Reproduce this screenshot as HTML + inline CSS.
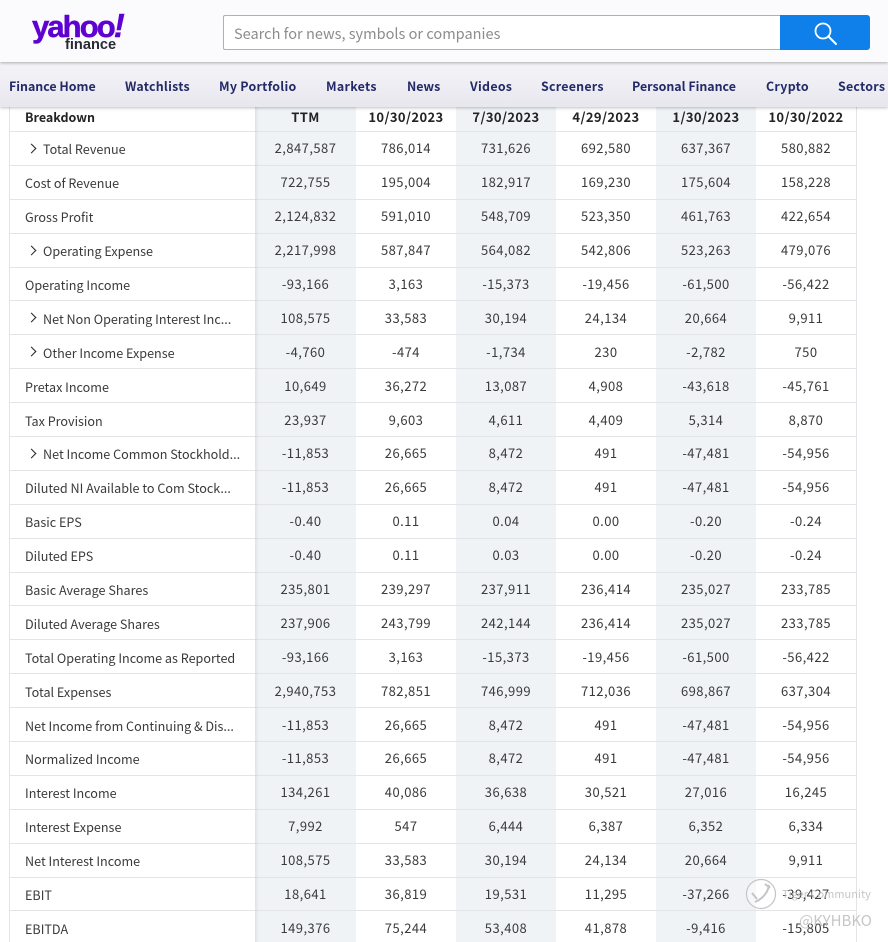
<!DOCTYPE html>
<html><head><meta charset="utf-8">
<style>
html,body{margin:0;padding:0;background:#fff;width:888px;height:942px;overflow:hidden;}
#p{width:888px;height:942px;overflow:hidden;position:relative;font-family:"Noto Sans CJK JP","Liberation Sans",sans-serif;color:#333;}
#hd{position:absolute;left:0;top:0;width:888px;height:62px;background:#fbfbfd;box-shadow:0 1px 3px rgba(0,0,0,.3);z-index:6;}
#nav{position:absolute;left:0;top:63px;width:888px;height:44px;background:linear-gradient(#f4f4f8,#e8e7ee);box-shadow:0 1px 3px rgba(0,0,0,.25);z-index:5;}
#nav span{position:absolute;top:14px;font-size:12.4px;line-height:19px;font-weight:700;color:#232a68;white-space:nowrap;}
.y{position:absolute;left:32px;top:9px;font:700 31px/34px "Liberation Sans",sans-serif;letter-spacing:-1.9px;color:#5f01d1;-webkit-text-stroke:.5px #5f01d1;white-space:nowrap;}
.y i{font-size:33px;}
.f{position:absolute;left:65px;top:36px;font:700 14.6px/18px "Liberation Sans",sans-serif;color:#2a2a33;}
#s{position:absolute;left:223px;top:15px;width:556px;height:33px;border:1px solid #b0b0b0;border-right:0;background:#fff;border-radius:2px 0 0 2px;font-size:14.55px;line-height:35px;color:#8c8c8c;text-indent:10px;}
#b{position:absolute;left:780px;top:15px;width:90px;height:35px;background:#0f7fe9;border-radius:0 3px 3px 0;}
table,tbody{display:block;}
table{position:absolute;left:9px;top:97px;width:848px;font-size:13px;letter-spacing:.45px;}
tr{display:flex;height:33.9px;box-sizing:border-box;}
td{display:flex;align-items:center;justify-content:center;box-sizing:border-box;width:100px;height:100%;padding:0;border-bottom:1px solid #e3e4e8;line-height:18px;color:#3a3a3a;white-space:nowrap;overflow:hidden;}
td:first-child{width:246px;justify-content:flex-start;padding:2px 0 0 15px;border-left:1px solid #e3e4e8;position:relative;font-size:12.6px;letter-spacing:0;}
td:nth-child(2){width:101px;}
td.i{padding-left:33px;}
td.i:before{content:"";position:absolute;left:18px;top:13px;width:6px;height:6px;border-top:1.5px solid #222;border-right:1.5px solid #222;transform:rotate(45deg);}
td:last-child{width:101px;border-right:1px solid #e3e4e8;}
td:nth-child(even){background:#f0f3f6;}
tr.h{height:35px;}
tr.h td{font-weight:700;color:#232323;padding-top:6px;letter-spacing:.38px;}
tr.h td:first-child{padding-top:6px;font-size:12.5px;letter-spacing:0;}
#sh{position:absolute;left:255px;top:100px;width:4px;height:842px;background:linear-gradient(90deg,rgba(0,0,0,.07),rgba(0,0,0,0));z-index:2;}
#w{position:absolute;left:0;top:0;z-index:8;pointer-events:none;}
.wt{position:absolute;color:#bdbdbd;z-index:8;white-space:nowrap;opacity:.85;}
</style></head><body><div id="p">
<div id="hd">
<div class="y">yahoo<i>!</i></div>
<div class="f">finance</div>
<div id="s">Search for news, symbols or companies</div>
<div id="b"><svg width="90" height="35" viewBox="0 0 90 35"><circle cx="43" cy="16" r="7.5" fill="none" stroke="#fff" stroke-width="1.8"/><path d="M48.5 21.5L56 29" stroke="#fff" stroke-width="2" stroke-linecap="round"/></svg></div>
</div>
<div id="nav">
<span style="left:9px">Finance Home</span><span style="left:125px;letter-spacing:.25px">Watchlists</span><span style="left:219px;letter-spacing:.25px">My Portfolio</span><span style="left:326px;letter-spacing:.3px">Markets</span><span style="left:407px">News</span><span style="left:470px;letter-spacing:.3px">Videos</span><span style="left:541px;letter-spacing:.25px">Screeners</span><span style="left:632px">Personal Finance</span><span style="left:766px;letter-spacing:.3px">Crypto</span><span style="left:838px;letter-spacing:.25px">Sectors</span>
</div>
<div id="sh"></div>
<table>
<tr class="h"><td>Breakdown</td><td>TTM</td><td>10/30/2023</td><td>7/30/2023</td><td>4/29/2023</td><td>1/30/2023</td><td>10/30/2022</td></tr>
<tr><td class="i">Total Revenue</td><td>2,847,587</td><td>786,014</td><td>731,626</td><td>692,580</td><td>637,367</td><td>580,882</td></tr>
<tr><td>Cost of Revenue</td><td>722,755</td><td>195,004</td><td>182,917</td><td>169,230</td><td>175,604</td><td>158,228</td></tr>
<tr><td>Gross Profit</td><td>2,124,832</td><td>591,010</td><td>548,709</td><td>523,350</td><td>461,763</td><td>422,654</td></tr>
<tr><td class="i">Operating Expense</td><td>2,217,998</td><td>587,847</td><td>564,082</td><td>542,806</td><td>523,263</td><td>479,076</td></tr>
<tr><td>Operating Income</td><td>-93,166</td><td>3,163</td><td>-15,373</td><td>-19,456</td><td>-61,500</td><td>-56,422</td></tr>
<tr><td class="i">Net Non Operating Interest Inc...</td><td>108,575</td><td>33,583</td><td>30,194</td><td>24,134</td><td>20,664</td><td>9,911</td></tr>
<tr><td class="i">Other Income Expense</td><td>-4,760</td><td>-474</td><td>-1,734</td><td>230</td><td>-2,782</td><td>750</td></tr>
<tr><td>Pretax Income</td><td>10,649</td><td>36,272</td><td>13,087</td><td>4,908</td><td>-43,618</td><td>-45,761</td></tr>
<tr><td>Tax Provision</td><td>23,937</td><td>9,603</td><td>4,611</td><td>4,409</td><td>5,314</td><td>8,870</td></tr>
<tr><td class="i">Net Income Common Stockhold...</td><td>-11,853</td><td>26,665</td><td>8,472</td><td>491</td><td>-47,481</td><td>-54,956</td></tr>
<tr><td>Diluted NI Available to Com Stock...</td><td>-11,853</td><td>26,665</td><td>8,472</td><td>491</td><td>-47,481</td><td>-54,956</td></tr>
<tr><td>Basic EPS</td><td>-0.40</td><td>0.11</td><td>0.04</td><td>0.00</td><td>-0.20</td><td>-0.24</td></tr>
<tr><td>Diluted EPS</td><td>-0.40</td><td>0.11</td><td>0.03</td><td>0.00</td><td>-0.20</td><td>-0.24</td></tr>
<tr><td>Basic Average Shares</td><td>235,801</td><td>239,297</td><td>237,911</td><td>236,414</td><td>235,027</td><td>233,785</td></tr>
<tr><td>Diluted Average Shares</td><td>237,906</td><td>243,799</td><td>242,144</td><td>236,414</td><td>235,027</td><td>233,785</td></tr>
<tr><td>Total Operating Income as Reported</td><td>-93,166</td><td>3,163</td><td>-15,373</td><td>-19,456</td><td>-61,500</td><td>-56,422</td></tr>
<tr><td>Total Expenses</td><td>2,940,753</td><td>782,851</td><td>746,999</td><td>712,036</td><td>698,867</td><td>637,304</td></tr>
<tr><td>Net Income from Continuing &amp; Dis...</td><td>-11,853</td><td>26,665</td><td>8,472</td><td>491</td><td>-47,481</td><td>-54,956</td></tr>
<tr><td>Normalized Income</td><td>-11,853</td><td>26,665</td><td>8,472</td><td>491</td><td>-47,481</td><td>-54,956</td></tr>
<tr><td>Interest Income</td><td>134,261</td><td>40,086</td><td>36,638</td><td>30,521</td><td>27,016</td><td>16,245</td></tr>
<tr><td>Interest Expense</td><td>7,992</td><td>547</td><td>6,444</td><td>6,387</td><td>6,352</td><td>6,334</td></tr>
<tr><td>Net Interest Income</td><td>108,575</td><td>33,583</td><td>30,194</td><td>24,134</td><td>20,664</td><td>9,911</td></tr>
<tr><td>EBIT</td><td>18,641</td><td>36,819</td><td>19,531</td><td>11,295</td><td>-37,266</td><td>-39,427</td></tr>
<tr><td>EBITDA</td><td>149,376</td><td>75,244</td><td>53,408</td><td>41,878</td><td>-9,416</td><td>-15,805</td></tr>
</table>
<svg id="w" width="888" height="942"><circle cx="761" cy="894" r="14.5" fill="rgba(255,255,255,.35)" stroke="#c4c4c4" stroke-width="1.2"/><path d="M769 885C768 893 762 899 755 902M752 893L757 899M765 884L770 888" fill="none" stroke="#c4c4c4" stroke-width="2"/></svg>
<div class="wt" style="left:782px;top:886px;font-size:11px;line-height:16px">Tiger Community</div>
<div class="wt" style="left:799px;top:912px;font-size:15px;line-height:18px">@KYHBKO</div>
</div></body></html>
